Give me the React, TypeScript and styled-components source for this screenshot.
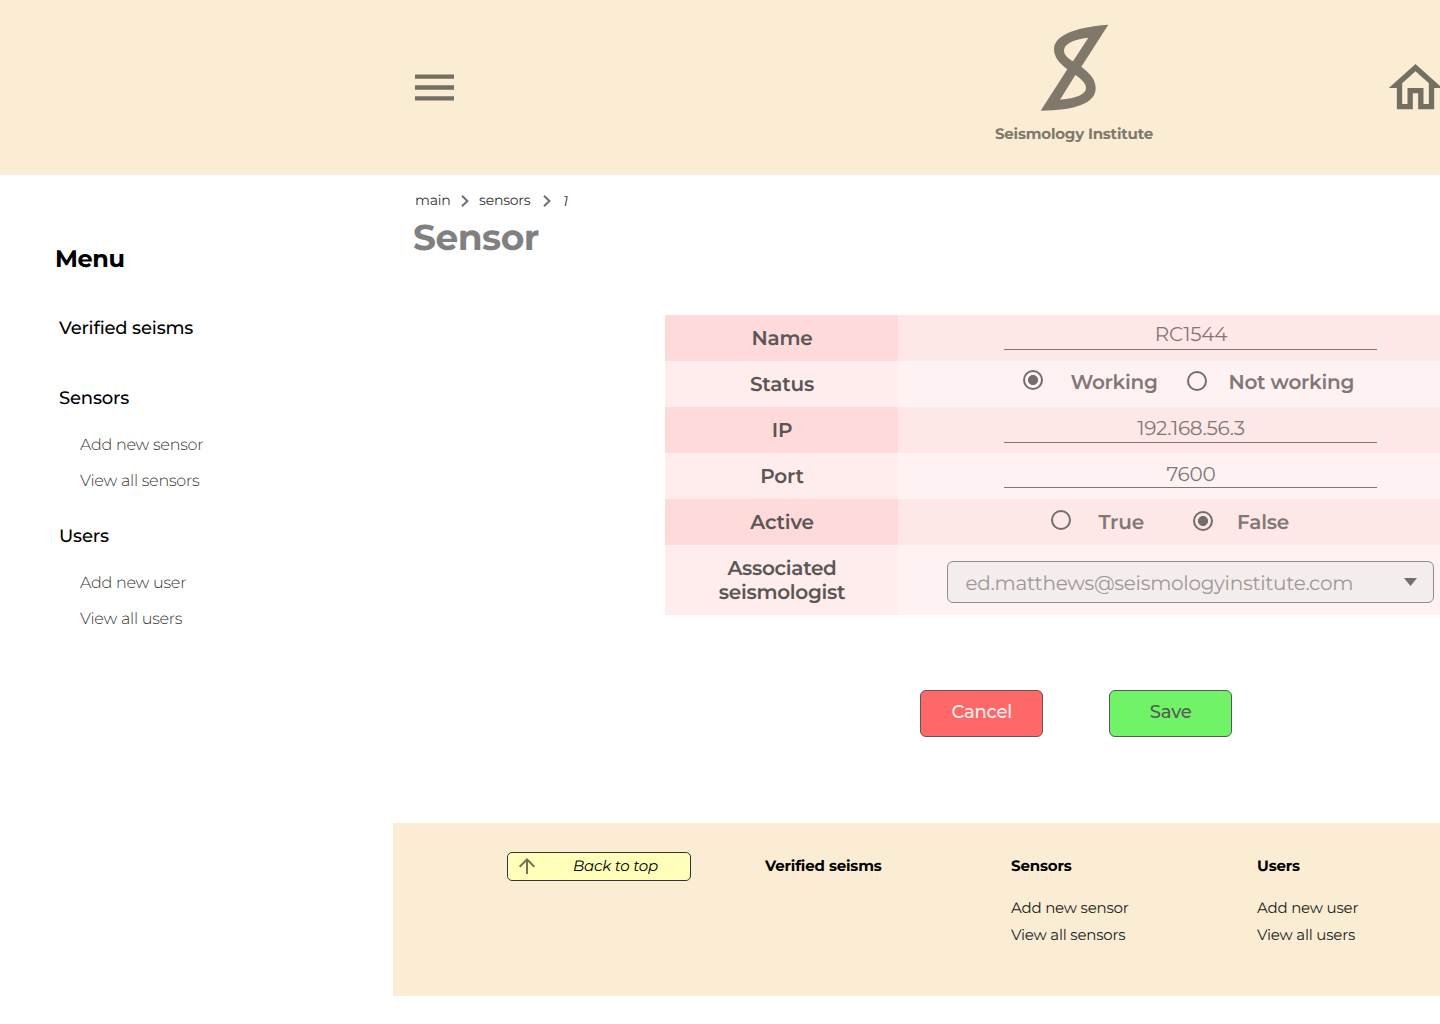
import React from "react";
import styled, { createGlobalStyle } from "styled-components";

const GlobalStyle = createGlobalStyle`
  *, *::before, *::after { box-sizing: border-box; }
  html, body { margin: 0; padding: 0; background: #fff; overflow: hidden; }
  body {
    font-family: Montserrat, Inter, "Open Sans", sans-serif;
    font-variant-ligatures: none;
    text-rendering: geometricPrecision;
  }
  h1, h2, h3, p, ul { margin: 0; padding: 0; }
  ul { list-style: none; }
`;

const Page = styled.div`
  width: 1440px;
  height: 1024px;
  overflow: hidden;
  display: flex;
  flex-direction: column;
  background: #fff;
`;

const Label = styled.span<{ $ls?: number }>`
  letter-spacing: ${(p) => p.$ls ?? -0.2}px;
  white-space: nowrap;
`;

const Header = styled.header`
  flex: none;
  display: flex;
  align-items: flex-start;
  height: 175px;
  padding-left: 408px;
  background: #faedd4;
`;

const MenuIcon = styled.svg`
  flex: none;
  width: 52px;
  height: 52px;
  margin-top: 61px;
  fill: #737062;
`;

const Brand = styled.div`
  flex: none;
  display: flex;
  flex-direction: column;
  align-items: center;
  width: 200px;
  margin: 24px 0 0 514px;
  color: #80786a;
  font-size: 15px;
  font-weight: 700;
  line-height: 20px;
`;

const Logo = styled.svg`
  width: 69px;
  height: 88px;
  margin-bottom: 12px;
  fill: #80786a;
`;

const HomeIcon = styled.svg`
  flex: none;
  width: 64px;
  height: 64px;
  margin: 56px 0 0 209px;
  fill: #737062;
`;

const Body = styled.div`
  flex: 1;
  display: flex;
  min-height: 0;
`;

const Sidebar = styled.nav`
  flex: none;
  width: 393px;
  padding: 70px 0 0 59px;
`;

const MenuTitle = styled.h2`
  margin: 0 0 38px -4px;
  font-size: 24px;
  font-weight: 700;
  line-height: 30px;
`;

const MenuGroup = styled.section<{ $after: number }>`
  margin-bottom: ${(p) => p.$after}px;
`;

const MenuHeading = styled.h3`
  font-size: 18px;
  font-weight: 500;
  line-height: 30px;
`;

const MenuLinks = styled.ul`
  padding: 15px 0 0 21px;
  font-size: 16px;
  font-weight: 300;
  line-height: 36px;
  color: #333;
`;

const Main = styled.main`
  flex: none;
  width: 1047px;
`;

const Breadcrumb = styled.div`
  display: flex;
  align-items: center;
  height: 20px;
  margin: 15.5px 0 0 22px;
  font-size: 14px;
  line-height: 20px;
  color: #333;
`;

const Crumb = styled.span<{ $w: number; $italic?: boolean }>`
  width: ${(p) => p.$w}px;
  padding-bottom: ${(p) => (p.$italic ? 0 : 1)}px;
  font-style: ${(p) => (p.$italic ? "italic" : "normal")};
`;

const Chevron = styled.svg<{ $after: number }>`
  width: 8px;
  height: 12px;
  margin-right: ${(p) => p.$after}px;
  fill: none;
  stroke: #707070;
  stroke-width: 2;
`;

const Title = styled.h1`
  margin: 7.5px 0 0 20px;
  font-size: 36px;
  font-weight: 700;
  line-height: 40px;
  color: #808080;
`;

const SensorTable = styled.div`
  margin: 57px 0 0 272px;
`;

const Row = styled.div<{ $h?: number }>`
  display: flex;
  height: ${(p) => p.$h ?? 46}px;
  --label: #ffecec;
  --field: #fff2f2;
  &:nth-child(odd) {
    --label: #ffdada;
    --field: #fee8e7;
  }
`;

const RowLabel = styled.div`
  flex: none;
  display: flex;
  flex-direction: column;
  align-items: center;
  justify-content: center;
  width: 233px;
  padding: 2px 0 0 1px;
  background: var(--label);
  color: #5a5655;
  font-size: 20px;
  font-weight: 600;
  line-height: 24px;
`;

const Field = styled.div<{ $left: number; $top: number }>`
  flex: 1;
  display: flex;
  align-items: flex-start;
  padding: ${(p) => p.$top}px 0 0 ${(p) => p.$left}px;
  background: var(--field);
  color: #827777;
  font-size: 20px;
  line-height: 24px;
`;

const Input = styled.div<{ $h: number }>`
  width: 373px;
  height: ${(p) => p.$h}px;
  padding-left: 1px;
  border-bottom: 1px solid #827777;
  text-align: center;
  font-weight: 400;
`;

const Radio = styled.span<{ $on?: boolean; $drop?: number }>`
  flex: none;
  width: 20px;
  height: 20px;
  margin-top: ${(p) => p.$drop ?? 0}px;
  border: 2px solid #736e6d;
  border-radius: 50%;
  background: ${(p) => (p.$on ? "radial-gradient(circle, #736e6d 4.7px, transparent 5.3px)" : "none")};
`;

const Option = styled.span<{ $w: number; $gap: number }>`
  flex: none;
  width: ${(p) => p.$w}px;
  margin-left: ${(p) => p.$gap}px;
  padding-top: 1px;
  font-weight: 600;
`;

const Select = styled.div`
  display: flex;
  align-items: center;
  justify-content: space-between;
  width: 487px;
  height: 42px;
  padding: 3px 16px 0 17.5px;
  border: 1px solid #948b8b;
  border-radius: 6px;
  background: #f4eded;
  color: #9f9896;
  font-weight: 400;
`;

const Caret = styled.svg`
  width: 13px;
  height: 8px;
  margin-top: -4px;
  fill: #736e6d;
`;

const Actions = styled.div`
  display: flex;
  gap: 66px;
  margin: 75px 0 0 527px;
`;

const Button = styled.button<{ $bg: string; $fg: string }>`
  width: 123px;
  height: 47px;
  padding: 0 0 3px 0.5px;
  border: 1px solid #595959;
  border-radius: 6px;
  background: ${(p) => p.$bg};
  color: ${(p) => p.$fg};
  font: 500 18px/24px Montserrat, Inter, sans-serif;
`;

const Footer = styled.footer`
  display: flex;
  align-items: flex-start;
  height: 173px;
  margin-top: 86px;
  padding: 29px 0 0 114px;
  background: #faedd4;
`;

const BackToTop = styled.div`
  flex: none;
  display: flex;
  align-items: center;
  width: 184px;
  height: 29px;
  margin-right: 74px;
  padding: 0 0 1px 7px;
  border: 1px solid #333;
  border-radius: 5px;
  background: #ffffb9;
  font-size: 15px;
  font-style: italic;
  line-height: 20px;
`;

const ArrowUp = styled.svg`
  width: 24px;
  height: 24px;
  margin-right: 34px;
  fill: #737053;
`;

const FooterColumn = styled.div`
  flex: none;
  width: 246px;
  padding-top: 4px;
  font-size: 15px;
`;

const FooterHeading = styled.h3`
  margin-bottom: 18px;
  font-size: 15px;
  font-weight: 700;
  line-height: 20px;
`;

const FooterLinks = styled.ul`
  line-height: 27px;
  color: #222;
`;

const menu: { heading: string; links: string[]; after: number }[] = [
  { heading: "Verified seisms", links: [], after: 40 },
  { heading: "Sensors", links: ["Add new sensor", "View all sensors"], after: 21 },
  { heading: "Users", links: ["Add new user", "View all users"], after: 0 },
];

export default function App() {
  return (
    <>
      <GlobalStyle />
      <Page>
        <Header>
          <MenuIcon viewBox="-0.23 -0.23 24 24">
            <path d="M3 18h18v-2H3v2zm0-5h18v-2H3v2zm0-7v2h18V6H3z" />
          </MenuIcon>
          <Brand>
            <Logo viewBox="180 42 207 264">
              <path
                fillRule="evenodd"
                d="M385 44C275 52 222 80 222 118C222 140 237 160 262 178L182 302C285 302 347 280 347 235C347 208 330 190 304 170ZM325 83C275 89 252 103 252 122C252 133 262 144 279 154ZM286 195C308 209 318 222 318 235C318 252 290 266 240 269Z"
              />
            </Logo>
            <Label>Seismology Institute</Label>
          </Brand>
          <HomeIcon viewBox="-0.19 0 24 24">
            <path d="M12 5.69l5 4.5V18h-2v-6H9v6H7v-7.81l5-4.5M12 3L2 12h3v8h6v-6h2v6h6v-8h3L12 3z" />
          </HomeIcon>
        </Header>
        <Body>
          <Sidebar>
            <MenuTitle><Label $ls={-0.4}>Menu</Label></MenuTitle>
            {menu.map((g) => (
              <MenuGroup key={g.heading} $after={g.after}>
                <MenuHeading><Label $ls={-0.17}>{g.heading}</Label></MenuHeading>
                {g.links.length > 0 && (
                  <MenuLinks>
                    {g.links.map((l) => <li key={l}><Label $ls={-0.25}>{l}</Label></li>)}
                  </MenuLinks>
                )}
              </MenuGroup>
            ))}
          </Sidebar>
          <Main>
            <Breadcrumb>
              <Crumb $w={46}><Label>main</Label></Crumb>
              <Chevron $after={10} viewBox="0 0 8 12"><path d="M1 .8L6.4 6L1 11.2" /></Chevron>
              <Crumb $w={64}><Label>sensors</Label></Crumb>
              <Chevron $after={12} viewBox="0 0 8 12"><path d="M1 .8L6.4 6L1 11.2" /></Chevron>
              <Crumb $w={10} $italic>1</Crumb>
            </Breadcrumb>
            <Title><Label $ls={-0.5}>Sensor</Label></Title>
            <SensorTable>
              <Row>
                <RowLabel><Label>Name</Label></RowLabel>
                <Field $left={106} $top={8}><Input $h={27}><Label $ls={-0.25}>RC1544</Label></Input></Field>
              </Row>
              <Row>
                <RowLabel><Label>Status</Label></RowLabel>
                <Field $left={125} $top={9}>
                  <Radio $on />
                  <Option $w={116.5} $gap={27.5}><Label $ls={-0.3}>Working</Label></Option>
                  <Radio $drop={1} />
                  <Option $w={140} $gap={21.5}><Label $ls={-0.26}>Not working</Label></Option>
                </Field>
              </Row>
              <Row>
                <RowLabel><Label>IP</Label></RowLabel>
                <Field $left={106} $top={10}><Input $h={26}><Label $ls={-0.28}>192.168.56.3</Label></Input></Field>
              </Row>
              <Row>
                <RowLabel><Label>Port</Label></RowLabel>
                <Field $left={106} $top={10}><Input $h={25}><Label $ls={-0.25}>7600</Label></Input></Field>
              </Row>
              <Row>
                <RowLabel><Label>Active</Label></RowLabel>
                <Field $left={153} $top={11}>
                  <Radio />
                  <Option $w={94.5} $gap={27.5}><Label>True</Label></Option>
                  <Radio $on $drop={1} />
                  <Option $w={80} $gap={24}><Label>False</Label></Option>
                </Field>
              </Row>
              <Row $h={70}>
                <RowLabel>
                  <Label $ls={-0.3}>Associated</Label>
                  <Label $ls={-0.3}>seismologist</Label>
                </RowLabel>
                <Field $left={49} $top={16}>
                  <Select>
                    <Label $ls={-0.28}>ed.matthews@seismologyinstitute.com</Label>
                    <Caret viewBox="0 0 13 8"><path d="M0 0H13L6.5 8Z" /></Caret>
                  </Select>
                </Field>
              </Row>
            </SensorTable>
            <Actions>
              <Button $bg="#ff6868" $fg="#fff0f0"><Label>Cancel</Label></Button>
              <Button $bg="#71f367" $fg="#555a55"><Label>Save</Label></Button>
            </Actions>
            <Footer>
              <BackToTop>
                <ArrowUp viewBox="0 0 24 24">
                  <path d="M4 12l1.41 1.41L11 7.83V20h2V7.83l5.58 5.59L20 12l-8-8-8 8z" />
                </ArrowUp>
                <Label>Back to top</Label>
              </BackToTop>
              {menu.map((c) => (
                <FooterColumn key={c.heading}>
                  <FooterHeading><Label $ls={-0.15}>{c.heading}</Label></FooterHeading>
                  <FooterLinks>
                    {c.links.map((l) => <li key={l}><Label>{l}</Label></li>)}
                  </FooterLinks>
                </FooterColumn>
              ))}
            </Footer>
          </Main>
        </Body>
      </Page>
    </>
  );
}
